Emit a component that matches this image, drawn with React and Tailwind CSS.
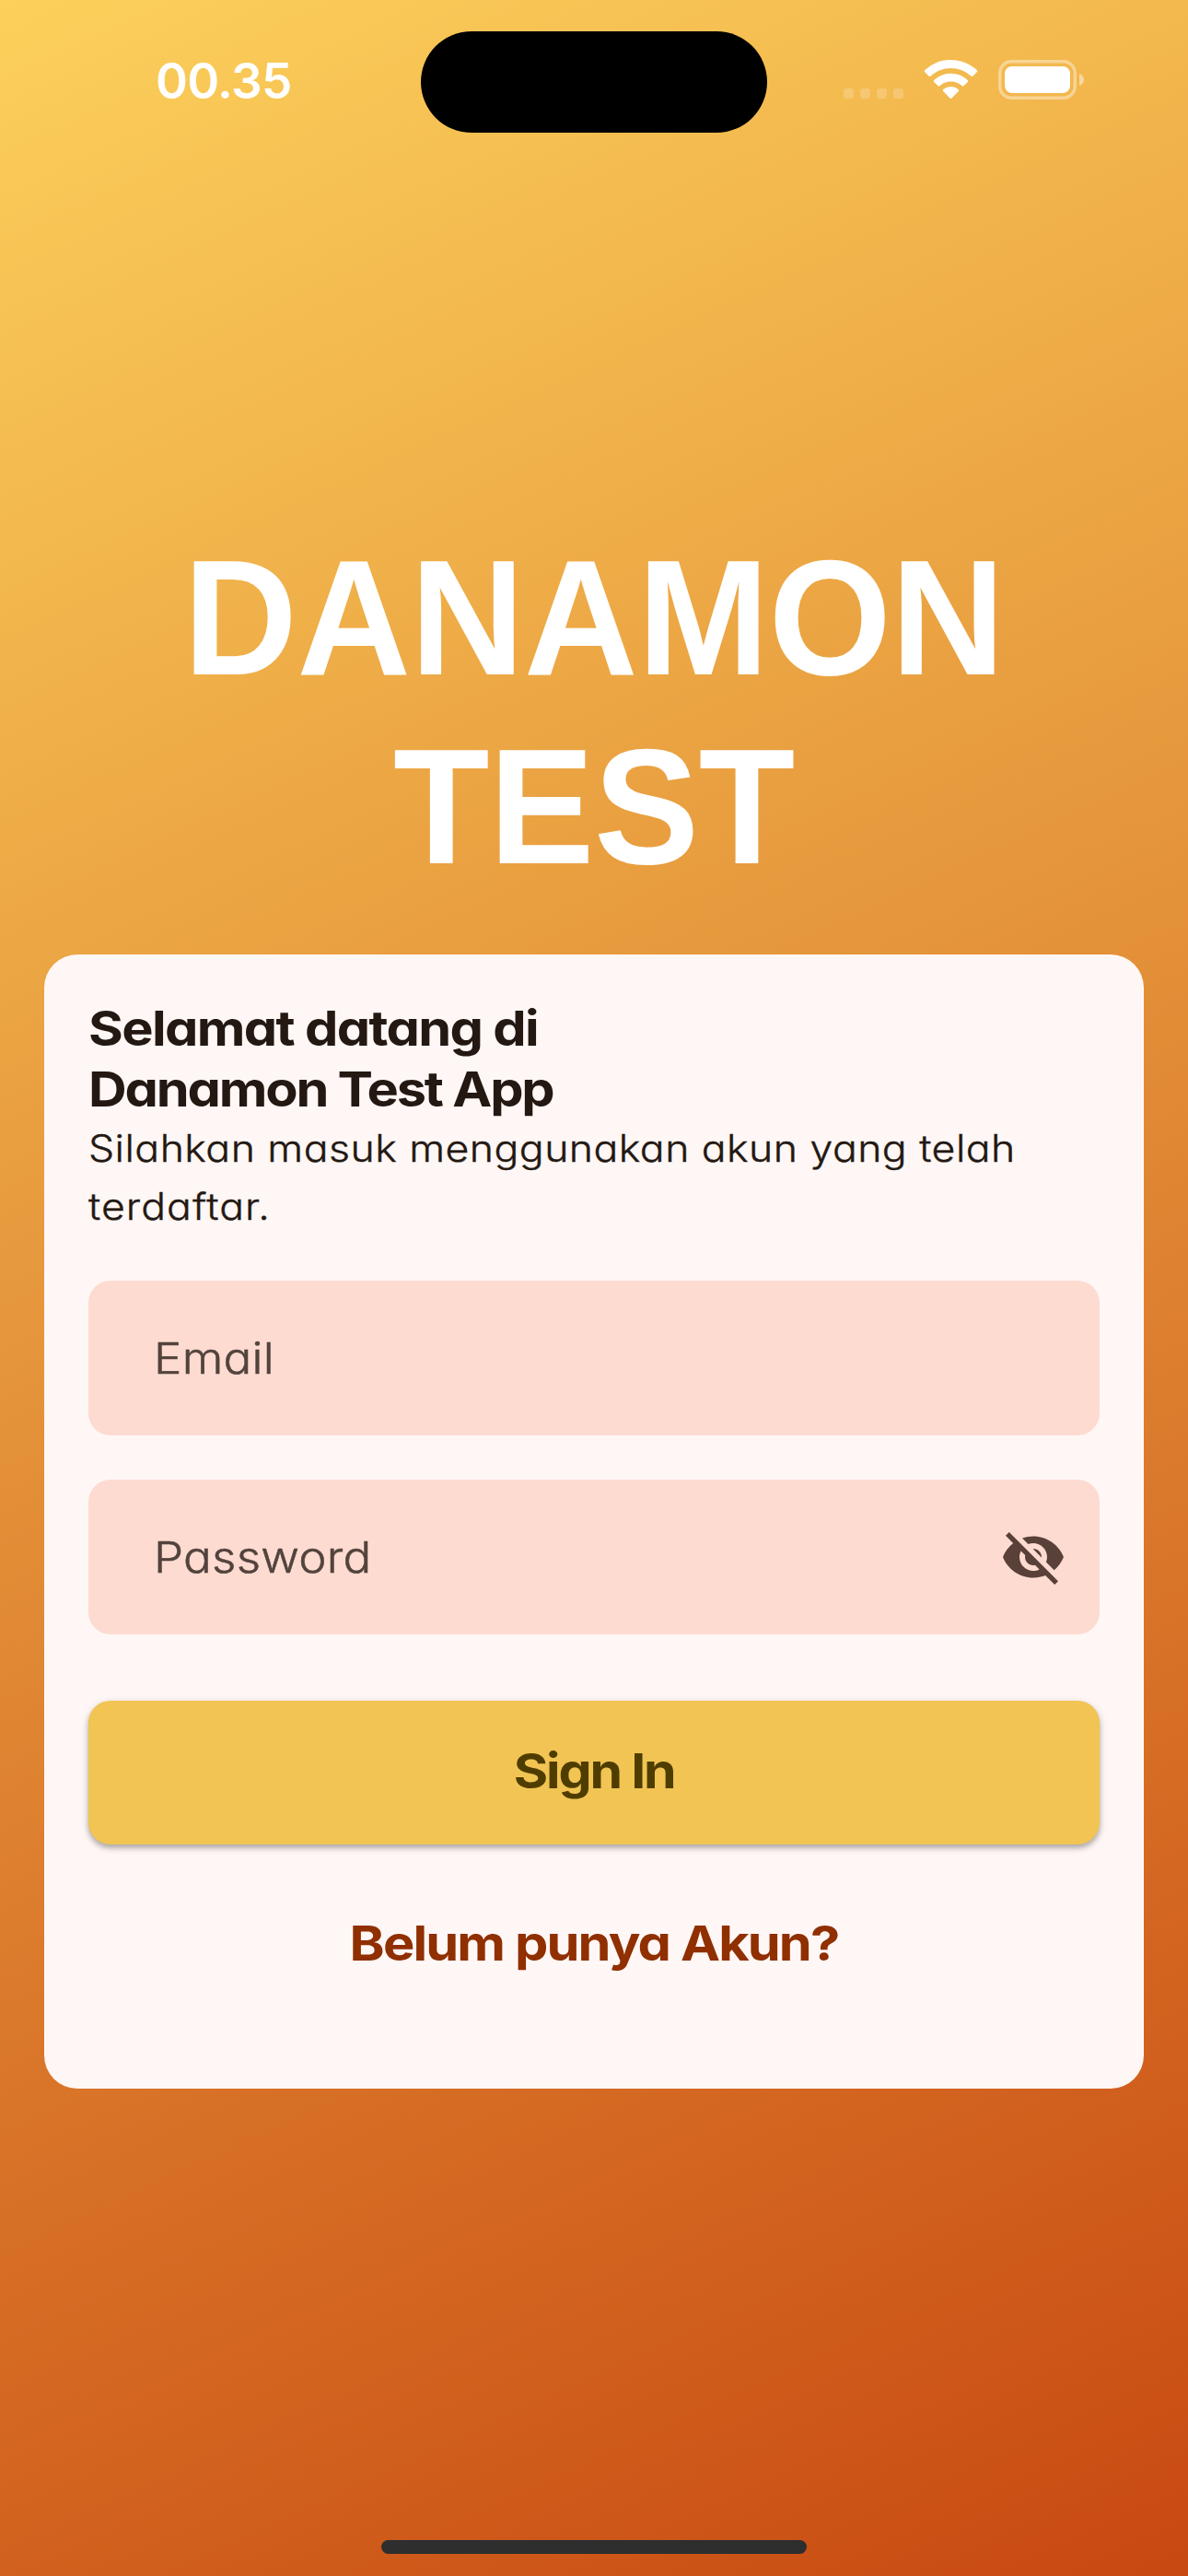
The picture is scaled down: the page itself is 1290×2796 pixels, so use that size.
import { MdVisibilityOff } from "react-icons/md";

function StatusBar() {
  return (
    <header className="flex h-[177px] items-start pl-[169px]">
      <time className="mt-[56px] h-[64px] w-[288px] shrink-0 whitespace-nowrap font-['Inter'] text-[53px] font-semibold leading-[64px] tracking-[-0.7px] text-white">
        00.35
      </time>
      <div className="mt-[34px] h-[110px] w-[376px] shrink-0 rounded-full bg-black" />
      <div className="ml-[83px] mt-[65px] flex h-[43px] items-start">
        <div className="mt-[31px] flex gap-[7px]">
          {[0, 1, 2, 3].map((dot) => (
            <span key={dot} className="size-[11px] rounded-[3.5px] bg-white/20" />
          ))}
        </div>
        <svg className="ml-[22px] h-[43px] w-[59px] shrink-0" viewBox="0 0 59 43" fill="#fff">
          <path d="M29.5 0C40.3 0 50.300 4.100 57.700 11.100Q58.700 12.200 57.700 13.300L53.300 17.700Q52.500 18.500 51.600 17.700A32.300 32.300 0 0 0 7.400 17.700Q6.500 18.500 5.700 17.700L1.300 13.300Q.300 12.200 1.300 11.100A41 41 0 0 1 29.500 0Z" />
          <path d="M29.500 14.700A26.700 26.700 0 0 1 47.700 21.900Q48.800 23 47.800 24L43.400 28.300Q42.600 29 41.600 28.200A18.200 18.200 0 0 0 17.400 28.200Q16.400 29 15.600 28.300L11.200 24Q10.200 23 11.300 21.900A26.700 26.700 0 0 1 29.500 14.700Z" />
          <path d="M29.500 29A13 13 0 0 1 37.700 32.100Q38.700 33 37.800 34L30.500 41.500Q29.500 42.500 28.500 41.500L21.200 34Q20.300 33 21.300 32.100A13 13 0 0 1 29.500 29Z" />
        </svg>
        <svg className="ml-[22px] h-[43px] w-[94px] shrink-0" viewBox="0 0 94 43">
          <rect x="1.750" y="1.750" width="81.500" height="39.500" rx="12.500" fill="none" stroke="#fff" strokeOpacity=".4" strokeWidth="3.500" />
          <rect x="7" y="7" width="71" height="29" rx="8" fill="#fff" />
          <path d="M88 15C91.300 16.200 93 18.600 93 21.500S91.300 26.800 88 28Z" fill="#fff" fillOpacity=".45" />
        </svg>
      </div>
    </header>
  );
}

function Field({ label, icon }) {
  return (
    <div className="flex h-[168px] items-center justify-between rounded-[24px] bg-[#fddbd1] pl-[71px] pr-[36px]">
      <span className="mt-[2px] origin-left scale-x-[1.1] text-[46.500px] font-light tracking-[0.200px] text-[#52433c] [-webkit-text-stroke:0.5px_#52433c]">{label}</span>
      {icon}
    </div>
  );
}

export default function App() {
  return (
    <div className="flex h-[2796px] w-[1290px] flex-col overflow-hidden bg-[linear-gradient(155.23deg,#fcd05b,#c84911)] font-['Inter'] [font-feature-settings:'cv11']">
      <StatusBar />

      <h1 className="mt-[391px] h-[468px] origin-top scale-y-[1.045] text-center font-['Liberation_Sans'] text-[171px] font-bold leading-[196px] tracking-[-0.2px] text-white">
        DANAMON
        <br />
        TEST
      </h1>

      <main className="mx-[48px] flex h-[1230.500px] shrink-0 flex-col rounded-[36px] bg-[#fff7f5] px-[48px]">
        <h2 className="mt-[46.500px] origin-left scale-x-[1.1] whitespace-nowrap text-[52.500px] font-bold leading-[66px] text-[#231812]">
          <span className="block tracking-[-1.500px]">Selamat datang di</span>
          <span className="block tracking-[-2px]">Danamon Test App</span>
        </h2>
        <p className="origin-left scale-x-[1.1] whitespace-nowrap text-[40.500px] font-light leading-[63px] text-[#231812] [-webkit-text-stroke:0.4px_#231812]">
          <span className="block tracking-[0.430px]">Silahkan masuk menggunakan akun yang telah</span>
          <span className="block tracking-[0.950px]">terdaftar.</span>
        </p>

        <div className="mt-[49.500px] flex flex-col gap-[48px]">
          <Field label="Email" />
          <Field label="Password" icon={<MdVisibilityOff className="size-[72px] text-[#594139]" />} />
        </div>

        <button className="mt-[72px] flex h-[156px] shrink-0 items-center justify-center rounded-[24px] bg-[#f1c453] pb-[3px] text-[52.500px] font-bold tracking-[-2px] text-[#4f3d00] shadow-[0_3px_9px_rgba(0,0,0,0.22),0_4px_5px_rgba(0,0,0,0.16)]">
          <span className="inline-block scale-x-[1.09]">Sign In</span>
        </button>
        <a className="mt-[74px] scale-x-[1.1] text-center text-[52.500px] font-bold leading-[66px] tracking-[-1.700px] text-[#902f00]">
          Belum punya Akun?
        </a>
      </main>

      <div className="mx-auto mt-auto mb-[24px] h-[15px] w-[462px] shrink-0 rounded-full bg-[#2e2e2e]" />
    </div>
  );
}
